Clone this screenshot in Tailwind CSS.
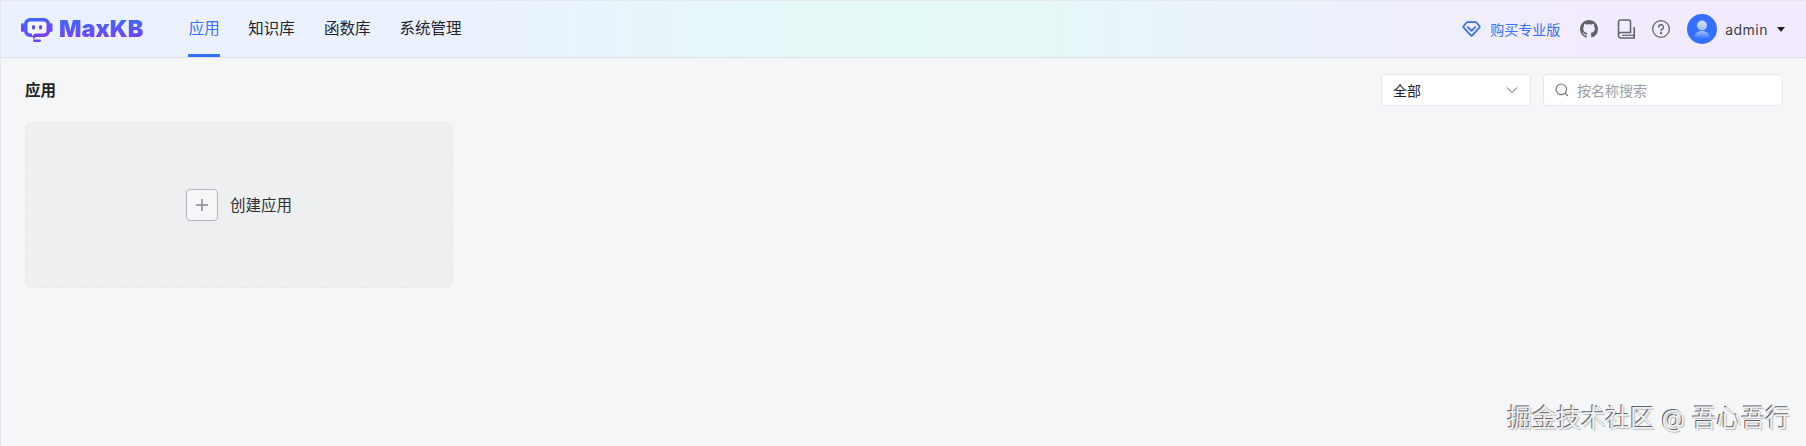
<!DOCTYPE html>
<html lang="zh-CN">
<head>
    <meta charset="UTF-8" />
    <title>MaxKB</title>
    <script src="https://cdn.jsdelivr.net/npm/@tailwindcss/browser@4"></script>
</head>
<body class="relative h-[446px] overflow-hidden border-l border-t border-[#e6e7ec] bg-[#f5f6f7] font-['Inter','Noto_Sans_CJK_SC',sans-serif] text-[#1f2329]">

    <!-- Header -->
    <header class="flex h-[57px] items-stretch justify-between border-b border-[#dcdfe6] bg-[linear-gradient(90deg,#ebf1ff_24%,#e3faf6_50%,#f2ebfe_88%)] pl-[20px] pr-[21px]">
        <div class="flex items-stretch">
            <div class="flex items-center gap-[6px]">
                <svg class="h-[25px] w-[32px]" viewBox="0 0 32 25" fill="none">
                    <defs>
                        <linearGradient id="logoFill" x1="0" y1="0" x2="0.6" y2="1">
                            <stop offset="0" stop-color="#3370ff" />
                            <stop offset="1" stop-color="#7f3bf5" />
                        </linearGradient>
                    </defs>
                    <rect x="0" y="6" width="3" height="9" rx="1.5" fill="url(#logoFill)" />
                    <rect x="28.5" y="6" width="3" height="9" rx="1.5" fill="url(#logoFill)" />
                    <path d="M9 1h14a6 6 0 0 1 6 6v7a6 6 0 0 1-6 6H15l-3 2.5V20H9a6 6 0 0 1-6-6V7a6 6 0 0 1 6-6z" fill="url(#logoFill)" />
                    <path d="M9.500 4.500h13a3 3 0 0 1 3 3v6a3 3 0 0 1-3 3H14l-3 2.500v-2.500H9.500a3 3 0 0 1-3-3v-6a3 3 0 0 1 3-3z" fill="#f3f5ff" />
                    <rect x="11" y="8" width="3" height="4.500" rx="1.500" fill="#4f52f8" />
                    <rect x="18" y="8" width="3" height="4.500" rx="1.500" fill="#5a4ef7" />
                    <rect x="12" y="22.500" width="8" height="2.500" rx="1.200" fill="#6d45f6" />
                </svg>
                <span class="bg-[linear-gradient(180deg,#3370ff,#7f3bf5)] bg-clip-text font-['Inter',sans-serif] text-[23.500px] font-black leading-none tracking-[0px] text-transparent">MaxKB</span>
            </div>
            <nav class="ml-[45px] flex items-stretch gap-[29px] text-[15.500px]">
                <a class="-mr-[1px] flex w-[32px] items-center justify-center border-b-[3px] border-[#3370ff] pt-[3px] text-[#3370ff]">应用</a>
                <a class="flex items-center">知识库</a>
                <a class="flex items-center">函数库</a>
                <a class="flex items-center">系统管理</a>
            </nav>
        </div>
        <div class="flex items-center">
            <a class="flex items-center gap-[9px] text-[14px] text-[#3370ff]">
                <svg class="h-[18px] w-[19px]" viewBox="0 0 19 18" fill="none" stroke="#3370ff" stroke-width="1.800" stroke-linejoin="round" stroke-linecap="round">
                    <path d="M5.500 2.200h8a1.500 1.500 0 0 1 1.200.6l2.800 3.400a1 1 0 0 1 0 1.300l-7.200 7.900a1 1 0 0 1-1.500 0L1.600 7.500a1 1 0 0 1 0-1.300l2.700-3.400a1.500 1.500 0 0 1 1.200-.6z" />
                    <path d="M5.800 7.200l3.700 3.700 3.700-3.700" />
                </svg>
                购买专业版
            </a>
            <svg class="ml-[20px] h-[18px] w-[18px]" viewBox="0 0 16 16" fill="#5f6368">
                <path d="M8 0C3.580 0 0 3.580 0 8c0 3.540 2.290 6.530 5.470 7.590.4.070.55-.17.55-.38 0-.19-.01-.82-.01-1.490-2.010.37-2.530-.49-2.690-.94-.09-.23-.48-.94-.82-1.130-.28-.15-.68-.52-.01-.53.63-.01 1.080.58 1.230.82.720 1.210 1.870.87 2.330.66.070-.52.280-.87.510-1.070-1.780-.2-3.640-.89-3.640-3.950 0-.87.310-1.590.820-2.150-.08-.2-.36-1.020.08-2.120 0 0 .67-.21 2.200.82.640-.18 1.320-.27 2-.27s1.360.09 2 .27c1.530-1.040 2.200-.82 2.200-.82.440 1.100.160 1.920.080 2.120.510.560.820 1.270.820 2.150 0 3.070-1.870 3.750-3.650 3.950.290.250.540.730.540 1.480 0 1.070-.01 1.930-.01 2.200 0 .210.150.460.550.380A8.013 8.013 0 0 0 16 8c0-4.420-3.580-8-8-8z" />
            </svg>
            <svg class="ml-[19px] h-[20px] w-[18px]" viewBox="0 0 18 20" fill="none" stroke="#63666d" stroke-width="1.600">
                <path d="M1.500 16V3A2 2 0 0 1 3.500 1h8A2 2 0 0 1 13.500 3v10.500H3.500a2 2 0 0 0-2 2.500z" />
                <path d="M1.500 16a2.500 2.500 0 0 0 2.500 3h13.200V8" />
                <path d="M5 16.300h12" stroke-width="1.200" />
            </svg>
            <svg class="ml-[17px] h-[18px] w-[18px]" viewBox="0 0 18 18" fill="none" stroke="#5f6368" stroke-width="1.300" stroke-linecap="round">
                <circle cx="9" cy="9" r="8.300" />
                <path d="M6.600 7.200A2.400 2.400 0 1 1 9.800 9.400c-.6.300-.8.700-.8 1.400" />
                <circle cx="9" cy="13.200" r=".5" fill="#5f6368" />
            </svg>
            <div class="ml-[17px] flex h-[30px] w-[30px] items-center justify-center overflow-hidden rounded-full bg-[#3370ff]">
                <svg class="h-[30px] w-[30px]" viewBox="0 0 30 30">
                    <defs>
                        <linearGradient id="headFill" x1="0" y1="0" x2="0" y2="1">
                            <stop offset="0" stop-color="#d5e1ff" />
                            <stop offset="1" stop-color="#a3bdff" />
                        </linearGradient>
                        <linearGradient id="bodyFill" x1="0" y1="0" x2="0" y2="1">
                            <stop offset="0" stop-color="#a9c1ff" />
                            <stop offset="1" stop-color="#3f79ff" />
                        </linearGradient>
                    </defs>
                    <circle cx="15" cy="11.500" r="5" fill="url(#headFill)" />
                    <path d="M7.500 24c0-4.500 3.200-7 7.500-7s7.500 2.500 7.500 7z" fill="url(#bodyFill)" />
                </svg>
            </div>
            <span class="ml-[8px] text-[14px] tracking-[0.5px] text-[#3a3f47]">admin</span>
            <span class="ml-[9px] h-0 w-0 border-x-[4.500px] border-t-[5px] border-x-transparent border-t-[#1f2329]"></span>
        </div>
    </header>

    <!-- Content -->
    <main class="pl-[24px] pr-[23px]">
        <div class="flex h-[64px] items-center justify-between">
            <h2 class="mt-[1px] text-[15.500px] font-semibold">应用</h2>
            <div class="flex gap-[12px]">
                <div class="flex h-[32px] w-[150px] items-center justify-between rounded-[4px] border border-[#e4e7ed] bg-white pl-[11px] pr-[12px] text-[14px]">
                    全部
                    <svg class="h-[12px] w-[12px]" viewBox="0 0 12 12" fill="none" stroke="#5f6368" stroke-width="1">
                        <path d="M1 3.500l5 5 5-5" />
                    </svg>
                </div>
                <div class="flex h-[32px] w-[240px] items-center gap-[8px] rounded-[4px] border border-[#e4e7ed] bg-white pl-[11px] text-[14px] text-[#9a9da4]">
                    <svg class="h-[14px] w-[14px]" viewBox="0 0 14 14" fill="none" stroke="#6b7078" stroke-width="1.100">
                        <circle cx="6.300" cy="6.300" r="5.300" />
                        <path d="M10.200 10.200L13 13" />
                    </svg>
                    按名称搜索
                </div>
            </div>
        </div>
        <div class="flex h-[166px] w-[428px] items-center justify-center gap-[12px] rounded-[8px] border border-dashed border-[#e6e7ea] bg-[#eeeff1]">
            <span class="flex h-[32px] w-[32px] items-center justify-center rounded-[4px] border border-[#b4b7bc] bg-[#f5f6f7]">
                <svg class="h-[14px] w-[14px]" viewBox="0 0 14 14" stroke="#84888f" stroke-width="1.400">
                    <path d="M7 1v12M1 7h12" />
                </svg>
            </span>
            <span class="pt-[1px] text-[15.500px] text-[#2c3036]">创建应用</span>
        </div>
    </main>

    <!-- Watermark -->
    <div class="absolute bottom-[12px] right-[16px] text-[24.500px] leading-[32px] text-[#f0f1f2] [text-shadow:-1px_-1px_0_#606266,1px_1px_1px_#b9bbbe]">掘金技术社区 @ 吾心吾行</div>
</body>
</html>
